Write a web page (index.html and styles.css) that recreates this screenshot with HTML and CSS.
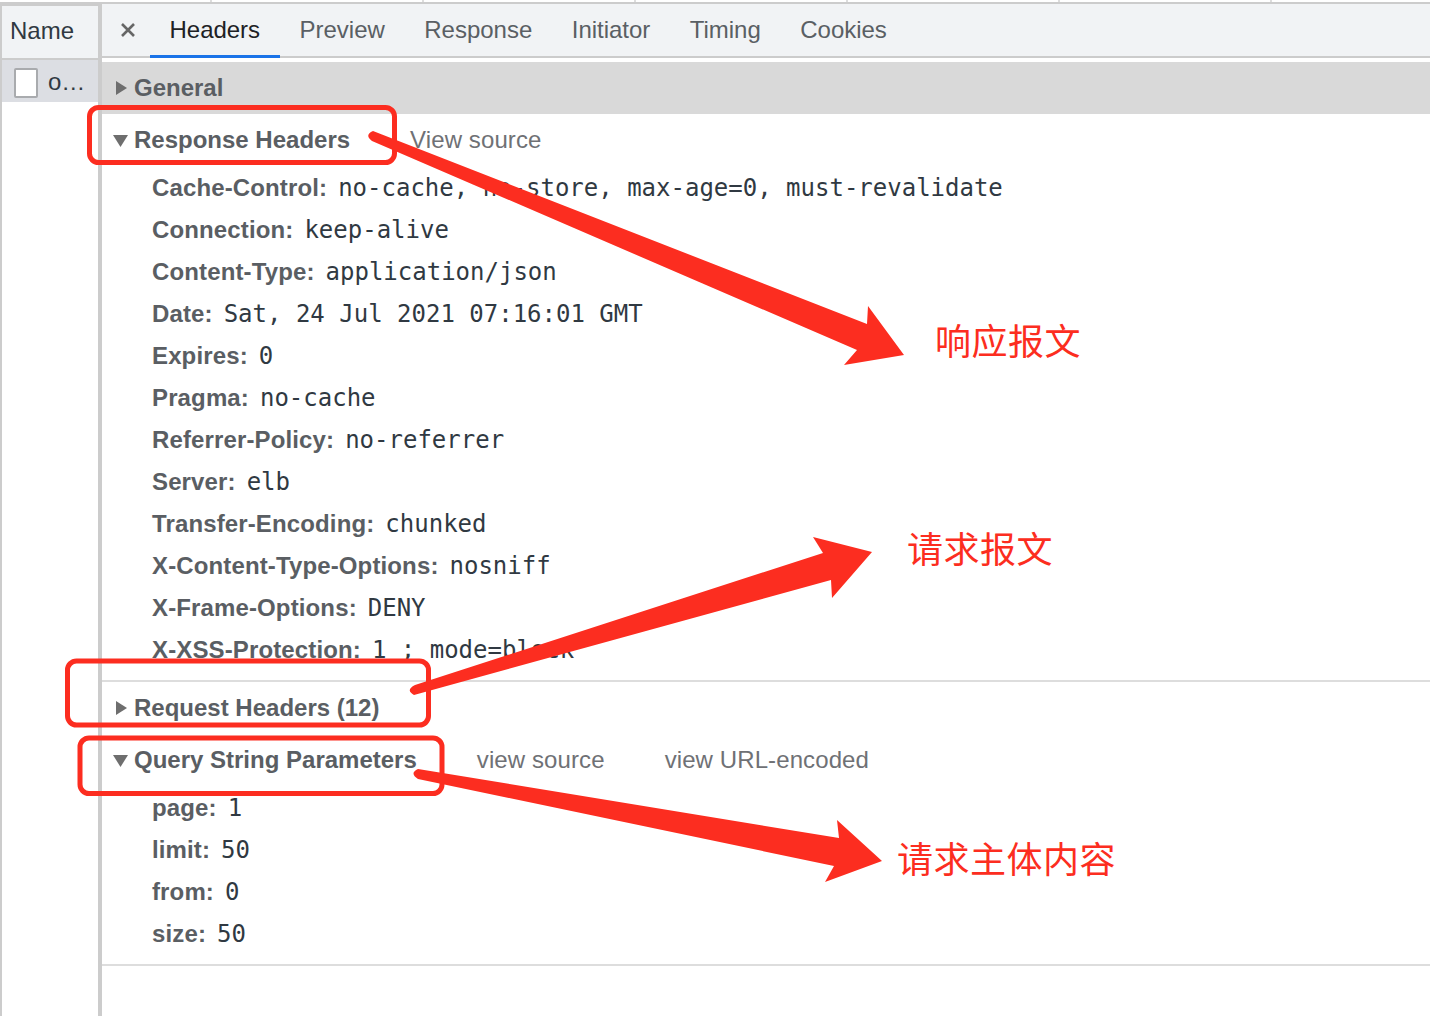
FILE: index.html
```html
<!DOCTYPE html>
<html lang="zh">
<head>
<meta charset="utf-8">
<title>Headers</title>
<link rel="stylesheet" href="styles.css">
</head>
<body>
<div class="app">
  <div class="topstrip"></div>
  <div class="main">
    <aside class="names">
      <div class="names-head">Name</div>
      <div class="names-row"><span class="fileicon"></span><span class="fname">o…</span></div>
    </aside>
    <section class="detail">
      <nav class="tabs">
        <span class="close"><svg width="14" height="14" viewBox="0 0 14 14"><path d="M1 1L13 13M13 1L1 13" class="close-x"/></svg></span>
        <span class="tab active">Headers</span>
        <span class="tab">Preview</span>
        <span class="tab">Response</span>
        <span class="tab">Initiator</span>
        <span class="tab">Timing</span>
        <span class="tab">Cookies</span>
      </nav>
      <div class="sec sec-general"><i class="tri right"></i><b>General</b></div>
      <div class="sec"><i class="tri down"></i><b>Response Headers</b><a class="src">View source</a></div>
      <div class="rows">
        <div class="row"><b>Cache-Control:</b><code>no-cache, no-store, max-age=0, must-revalidate</code></div>
        <div class="row"><b>Connection:</b><code>keep-alive</code></div>
        <div class="row"><b>Content-Type:</b><code>application/json</code></div>
        <div class="row"><b>Date:</b><code>Sat, 24 Jul 2021 07:16:01 GMT</code></div>
        <div class="row"><b>Expires:</b><code>0</code></div>
        <div class="row"><b>Pragma:</b><code>no-cache</code></div>
        <div class="row"><b>Referrer-Policy:</b><code>no-referrer</code></div>
        <div class="row"><b>Server:</b><code>elb</code></div>
        <div class="row"><b>Transfer-Encoding:</b><code>chunked</code></div>
        <div class="row"><b>X-Content-Type-Options:</b><code>nosniff</code></div>
        <div class="row"><b>X-Frame-Options:</b><code>DENY</code></div>
        <div class="row"><b>X-XSS-Protection:</b><code>1 ; mode=block</code></div>
      </div>
      <div class="divider"></div>
      <div class="sec"><i class="tri right"></i><b>Request Headers (12)</b></div>
      <div class="sec"><i class="tri down"></i><b>Query String Parameters</b><a class="src">view source</a><a class="src">view URL-encoded</a></div>
      <div class="rows rows-q">
        <div class="row"><b>page:</b><code>1</code></div>
        <div class="row"><b>limit:</b><code>50</code></div>
        <div class="row"><b>from:</b><code>0</code></div>
        <div class="row"><b>size:</b><code>50</code></div>
      </div>
      <div class="divider"></div>
    </section>
  </div>
  <svg class="marks" width="1430" height="1016" viewBox="0 0 1430 1016">
    <rect x="89.5" y="107.5" width="305" height="55" rx="9" class="box"/>
    <rect x="67.5" y="661" width="361" height="64" rx="9" class="box"/>
    <rect x="80" y="738" width="362" height="55.5" rx="9" class="box"/>
    <path class="arrow" d="M373 131 Q364 135 372 141 L857 350 L844 365 L904 355 L868 306 L867 324 Z"/>
    <path class="arrow" d="M415 685 Q405 690 414 695 L831 580 L832 598 L872 552 L813 537 L823 553 Z"/>
    <path class="arrow" d="M418 769 Q409 773 418 779 L834 866 L825 882 L882 861 L837 820 L839 838 Z"/>
  </svg>
  <div class="note note-a">响应报文</div>
  <div class="note note-b">请求报文</div>
  <div class="note note-c">请求主体内容</div>
</div>
</body>
</html>
```
FILE: styles.css
```css
* { box-sizing: border-box; }
html, body { margin: 0; padding: 0; background: #fff; }
.app {
  position: relative;
  width: 1430px;
  height: 1016px;
  overflow: hidden;
  font-family: "Liberation Sans", Arial, sans-serif;
  font-size: 24px;
  color: #303942;
  display: flex;
  flex-direction: column;
}
.topstrip {
  height: 4px;
  flex: none;
  border-bottom: 2px solid #ccc;
  background: repeating-linear-gradient(90deg, #fff 0, #fff 210px, #ddd 210px, #ddd 212px);
}
.main { flex: 1; display: flex; min-height: 0; }
.names {
  width: 102px;
  flex: none;
  border-left: 2px solid #ccc;
  border-right: 4px solid #ccc;
}
.names-head {
  height: 56px;
  padding: 11px 0 0 8px;
  line-height: 28px;
  background: #f1f3f5;
  border-top: 2px solid #ccc;
  border-bottom: 2px solid #ccc;
}
.names-row {
  height: 42px;
  background: #dcdee3;
  display: flex;
  align-items: center;
  padding-left: 12px;
  gap: 10px;
}
.fileicon {
  width: 24px;
  height: 30px;
  margin-top: 3px;
  background: #fff;
  border: 2px solid #a9abae;
  border-radius: 2px;
  flex: none;
}
.fname { line-height: 30px; margin-top: 2px; }
.detail { flex: 1; min-width: 0; }
.tabs {
  height: 54px;
  background: #f1f3f5;
  border-bottom: 2px solid #ccc;
  display: flex;
  align-items: flex-start;
  color: #5a5f64;
  letter-spacing: -0.02px;
}
.close { width: 48px; height: 52px; display: flex; padding: 19px 0 0 19px; }
.close-x { fill: none; stroke: #666; stroke-width: 2.6; }
.tab { padding: 11px 20px 0 19.5px; height: 54px; line-height: 30px; flex: none; }
.tab.active { color: #202124; border-bottom: 3px solid #1a73e8; }
.sec {
  height: 52px;
  display: flex;
  align-items: center;
  color: #5a5e63;
  padding-left: 11px;
}
.sec b { font-size: 24px; margin-left: 5px; }
.sec-general { background: #d9d9d9; margin-top: 4px; }
.tri { width: 16px; height: 16px; flex: none; display: block; background: #6e6e6e; }
.tri.right { clip-path: polygon(3px 1px, 14px 8px, 3px 15px); }
.tri.down { clip-path: polygon(0 3px, 15px 3px, 7.5px 15px); }
.src { color: #6f7175; margin-left: 60px; letter-spacing: 0.1px; }
.rows { padding: 1px 0 0 50px; height: 514px; overflow: hidden; }
.rows-q { height: 178px; }
.row { height: 42px; line-height: 42px; display: flex; white-space: nowrap; color: #5a5e63; }
.row b { font-size: 24px; letter-spacing: 0.13px; }
.row code { font-family: "DejaVu Sans Mono", "Liberation Mono", monospace; font-size: 24px; margin-left: 11px; color: #303942; }
.divider { height: 2px; background: #ddd; }
.marks { position: absolute; left: 0; top: 0; pointer-events: none; }
.box { fill: none; stroke: #fc2d20; stroke-width: 5; }
.arrow { fill: #fc2d20; }
.note {
  position: absolute;
  color: #fc2d20;
  font-family: "Noto Sans CJK SC", sans-serif;
  font-size: 36px;
  letter-spacing: 0.5px;
  line-height: 40px;
  white-space: nowrap;
}
.note-a { left: 935px; top: 319px; }
.note-b { left: 907px; top: 527px; }
.note-c { left: 897px; top: 837px; }
```
